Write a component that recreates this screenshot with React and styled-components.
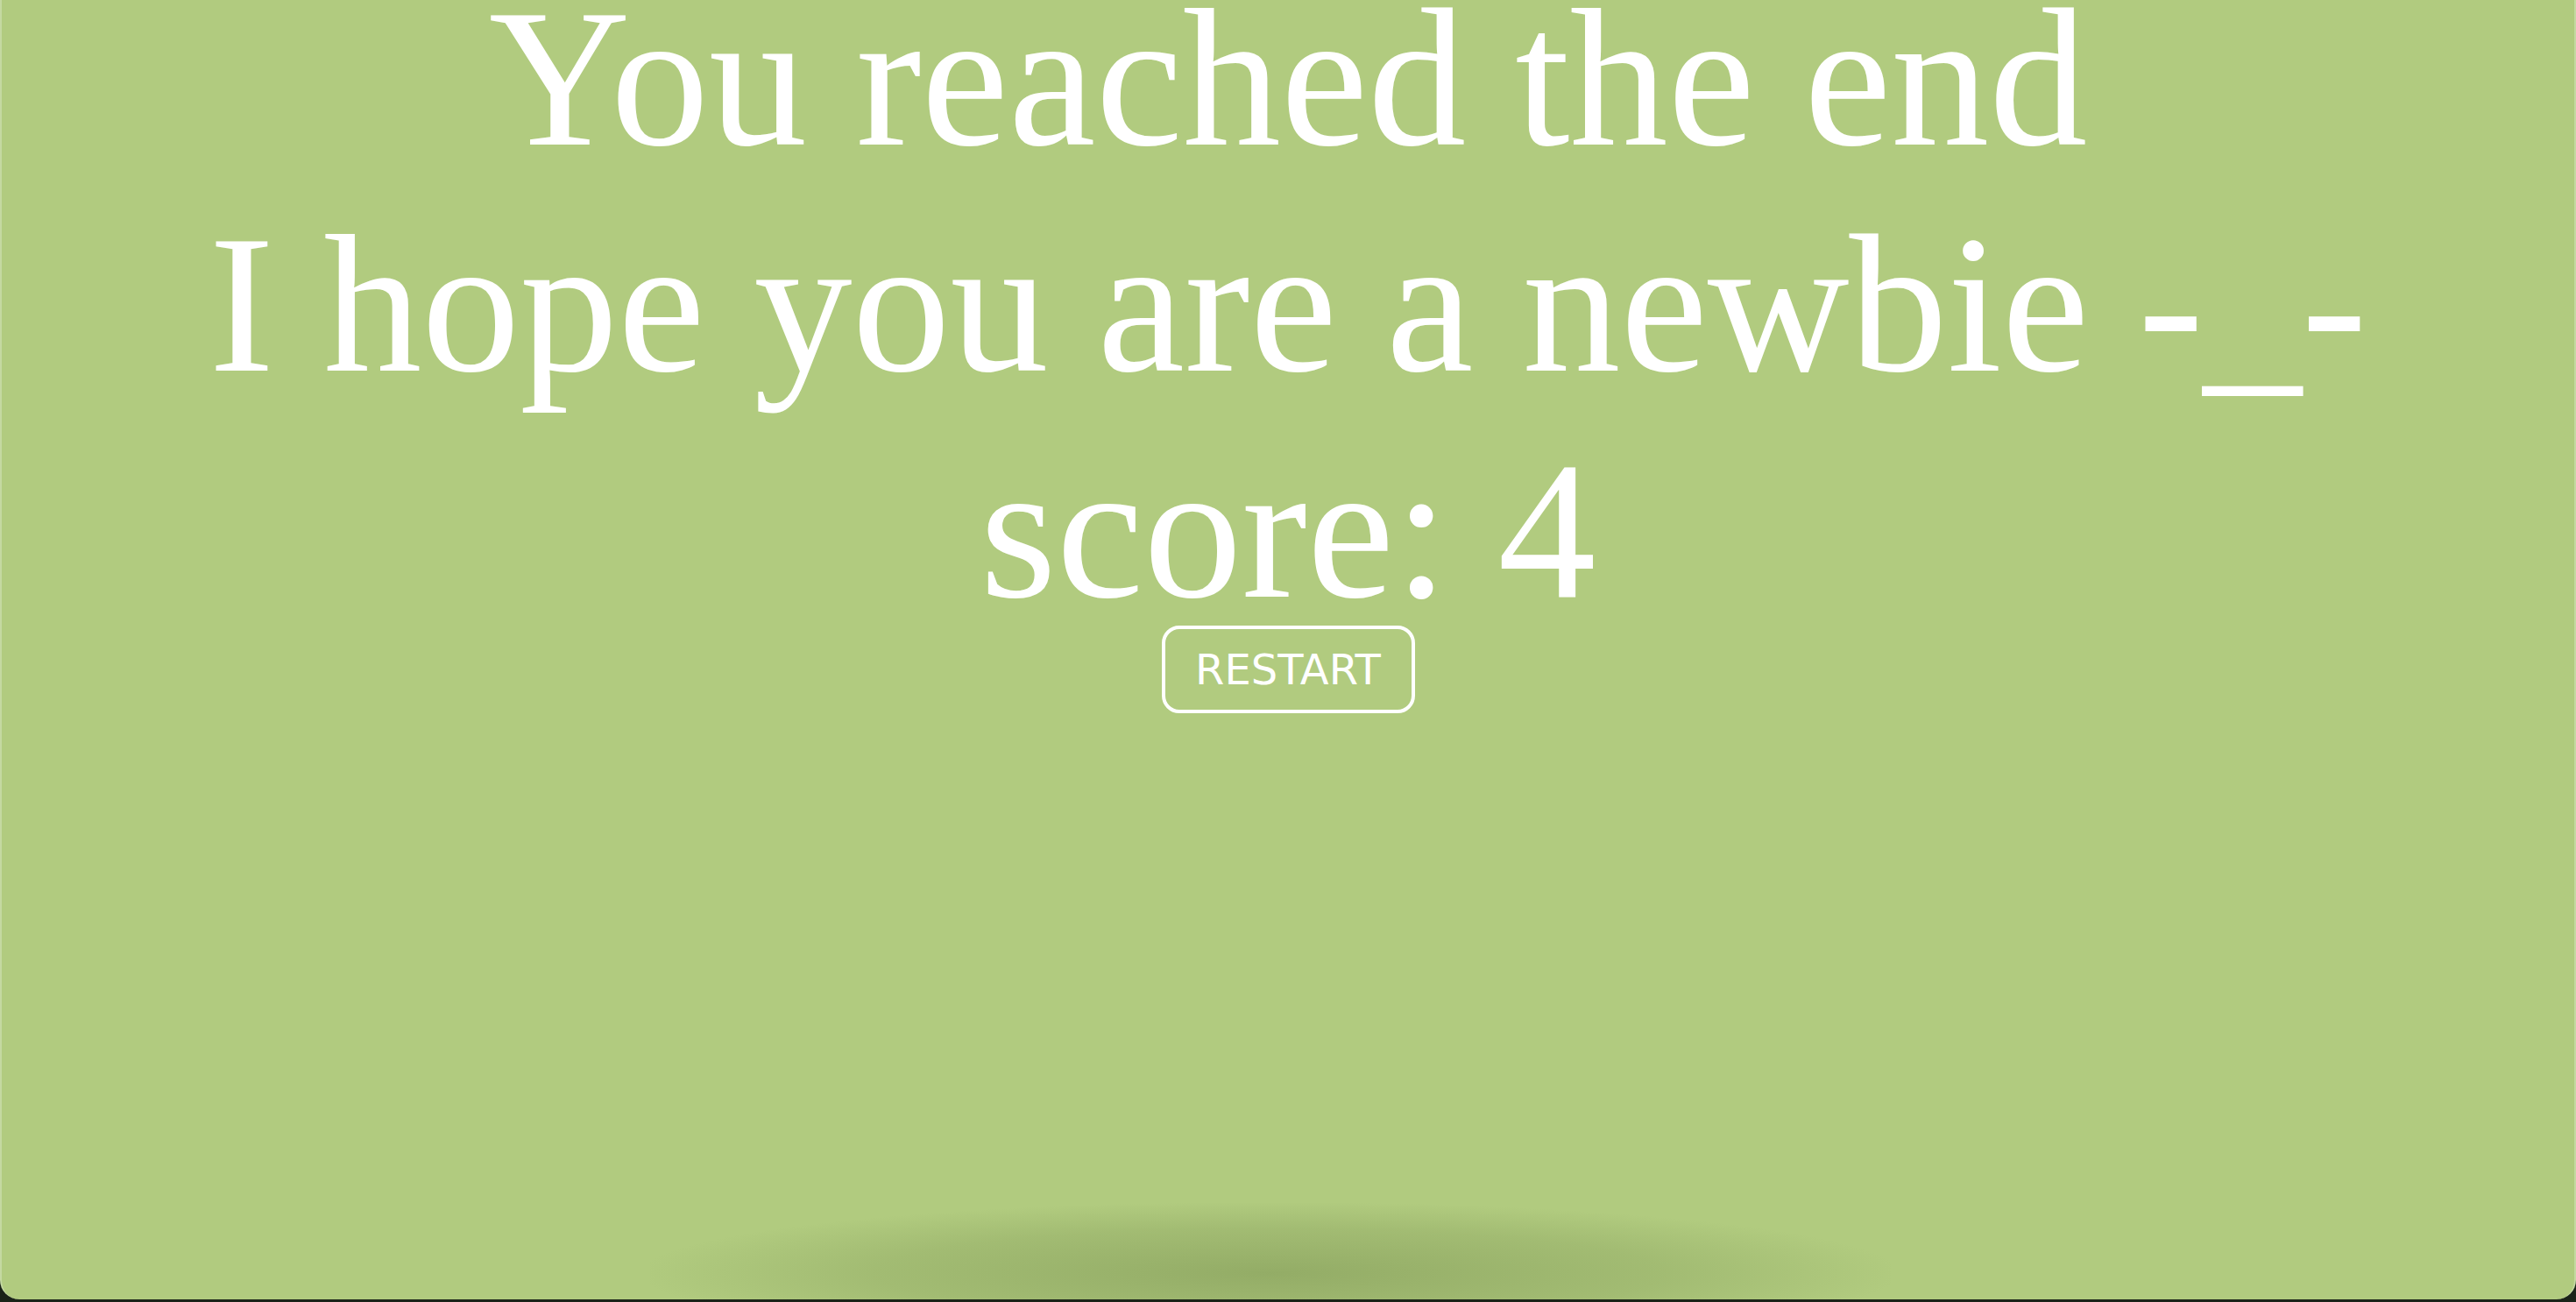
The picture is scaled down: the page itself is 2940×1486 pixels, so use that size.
import React from 'react';
import styled, { createGlobalStyle } from 'styled-components';

const GlobalStyle = createGlobalStyle`
  html, body {
    margin: 0;
    padding: 0;
    background: #1a2318;
  }
  * {
    box-sizing: border-box;
  }
`;

const Screen = styled.main`
  position: relative;
  height: 1483px;
  background-color: #b1cb7f;
  border-left: 2px solid #c4d9a1;
  border-right: 2px solid #c4d9a1;
  border-radius: 0 0 22px 22px;
  overflow: hidden;
  display: flex;
  flex-direction: column;
  align-items: center;
  color: #fff;

  /* soft shade along the bottom edge */
  &::after {
    content: '';
    position: absolute;
    left: 740px;
    right: 780px;
    bottom: -50px;
    height: 160px;
    background: radial-gradient(ellipse at center, rgba(118, 142, 78, 0.5) 0%, rgba(118, 142, 78, 0.25) 45%, rgba(118, 142, 78, 0) 72%);
    pointer-events: none;
  }
`;

const Message = styled.div`
  margin-top: -40px;
  text-align: center;
  font-family: 'Liberation Serif', 'Times New Roman', serif;
  font-size: 224px;
  line-height: 258px;
  white-space: nowrap;
`;

const Line = styled.div``;

const RestartButton = styled.button`
  margin-top: -20px;
  width: 289px;
  height: 100px;
  border: 4px solid #fff;
  border-radius: 20px;
  background: transparent;
  color: #fff;
  font-family: 'DejaVu Sans', 'Liberation Sans', sans-serif;
  font-size: 48px;
  padding: 0;
  cursor: pointer;
`;

const App = () => {
  return (
    <>
      <GlobalStyle />
      <Screen>
        <Message>
          <Line>You reached the end</Line>
          <Line>I hope you are a newbie -_-</Line>
          <Line>score: 4</Line>
        </Message>
        <RestartButton>RESTART</RestartButton>
      </Screen>
    </>
  );
};

export default App;
